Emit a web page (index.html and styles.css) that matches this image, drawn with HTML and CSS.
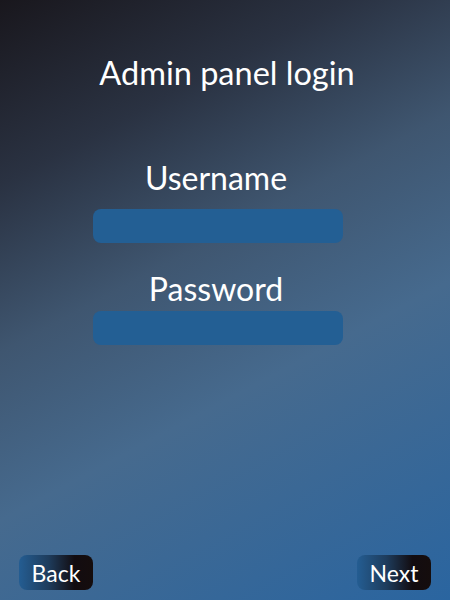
FILE: index.html
```html
<!DOCTYPE html>
<html>
<head>
<meta charset="utf-8">
<link rel="stylesheet" href="styles.css">
</head>
<body>
<div class="screen">
  <h1 class="title">Admin panel login</h1>
  <div class="form">
    <label class="label">Username</label>
    <div class="field"></div>
    <label class="label label-pw">Password</label>
    <div class="field field-pw"></div>
  </div>
  <div class="actions">
    <button class="btn">Back</button>
    <button class="btn">Next</button>
  </div>
</div>
</body>
</html>
```
FILE: styles.css
```css
html, body {
  margin: 0;
  padding: 0;
  width: 450px;
  height: 600px;
  overflow: hidden;
}
.screen {
  width: 450px;
  height: 600px;
  box-sizing: border-box;
  display: flex;
  flex-direction: column;
  align-items: center;
  font-family: "Lato", "Open Sans", sans-serif;
  color: #ffffff;
  background: linear-gradient(152deg, #19171d 0%, #2a3242 22%, #3f5670 42%, #466a8e 62%, #2a65a0 100%);
  padding: 10px 19px 10px 19px;
}
.title {
  margin: 44px 0 0 4px;
  font-size: 32.5px;
  font-weight: 400;
  line-height: 38px;
}
.form {
  display: flex;
  flex-direction: column;
  align-items: center;
  margin: 67px 14px 0 0;
}
.label {
  font-size: 32px;
  line-height: 38px;
  margin-right: 4px;
}
.label-pw {
  margin-top: 27px;
}
.field {
  width: 250px;
  height: 34px;
  border-radius: 8px;
  background: #235f94;
  margin-top: 12px;
}
.field-pw {
  margin-top: 3px;
}
.actions {
  margin-top: auto;
  width: 100%;
  display: flex;
  justify-content: space-between;
}
.btn {
  width: 74px;
  height: 35px;
  border: none;
  border-radius: 8px;
  padding: 0;
  color: #ffffff;
  font-family: "Lato", "Open Sans", sans-serif;
  font-size: 23px;
  background: linear-gradient(90deg, #245d92 0%, #1e3c5c 40%, #120c10 75%, #150d0d 100%);
}
```
